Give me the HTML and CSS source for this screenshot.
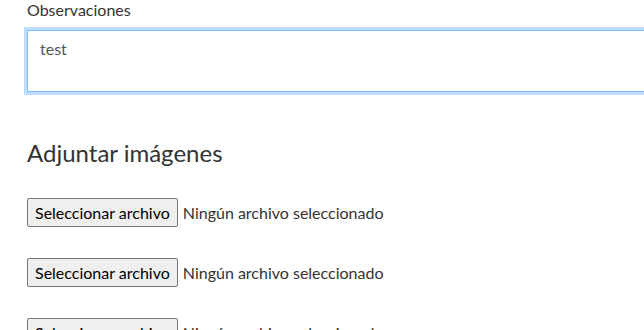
FILE: index.html
```html
<!DOCTYPE html>
<html lang="es">
<head>
  <meta charset="UTF-8" />
  <title>Adjuntar imágenes</title>
  <link rel="stylesheet" href="styles.css">
</head>
<body>
  <label class="field-label" for="obs">Observaciones</label>
  <textarea id="obs" class="obs-input">test</textarea>

  <h3 class="section-title">Adjuntar imágenes</h3>

  <div class="file-row">
    <button class="file-btn">Seleccionar archivo</button>
    <span class="file-name">Ningún archivo seleccionado</span>
  </div>
  <div class="file-row">
    <button class="file-btn">Seleccionar archivo</button>
    <span class="file-name">Ningún archivo seleccionado</span>
  </div>
  <div class="file-row">
    <button class="file-btn">Seleccionar archivo</button>
    <span class="file-name">Ningún archivo seleccionado</span>
  </div>
</body>
</html>
```

FILE: styles.css
```css
html, body {
  overflow: hidden;
}
body {
  font-family: Lato, 'Liberation Sans', sans-serif;
  color: #333;
  margin: 0;
  padding: 0 0 0 27px;
  background: #fff;
}
.field-label {
  display: block;
  font-size: 16px;
  line-height: 20px;
  margin-bottom: 10px;
}
.obs-input {
  display: block;
  box-sizing: border-box;
  width: 700px;
  height: 62px;
  padding: 8px 12px;
  font-family: Lato, 'Liberation Sans', sans-serif;
  font-size: 16px;
  color: #555;
  border: 1px solid #80bdff;
  box-shadow: 0 0 0 3px rgba(0, 123, 255, 0.25);
  outline: none;
  resize: none;
  margin: 0;
}
.section-title {
  font-size: 24px;
  font-weight: 400;
  line-height: 30px;
  margin: 46px 0 30px;
}
.file-row {
  display: flex;
  align-items: center;
  gap: 5px;
  margin-bottom: 31px;
}
.file-btn {
  font-family: Lato, 'Liberation Sans', sans-serif;
  font-size: 16px;
  color: #000;
  background: #efefef;
  border: 1px solid #767676;
  border-radius: 2px;
  height: 29px;
  padding: 0 7px;
}
.file-name {
  font-size: 16px;
}
```
